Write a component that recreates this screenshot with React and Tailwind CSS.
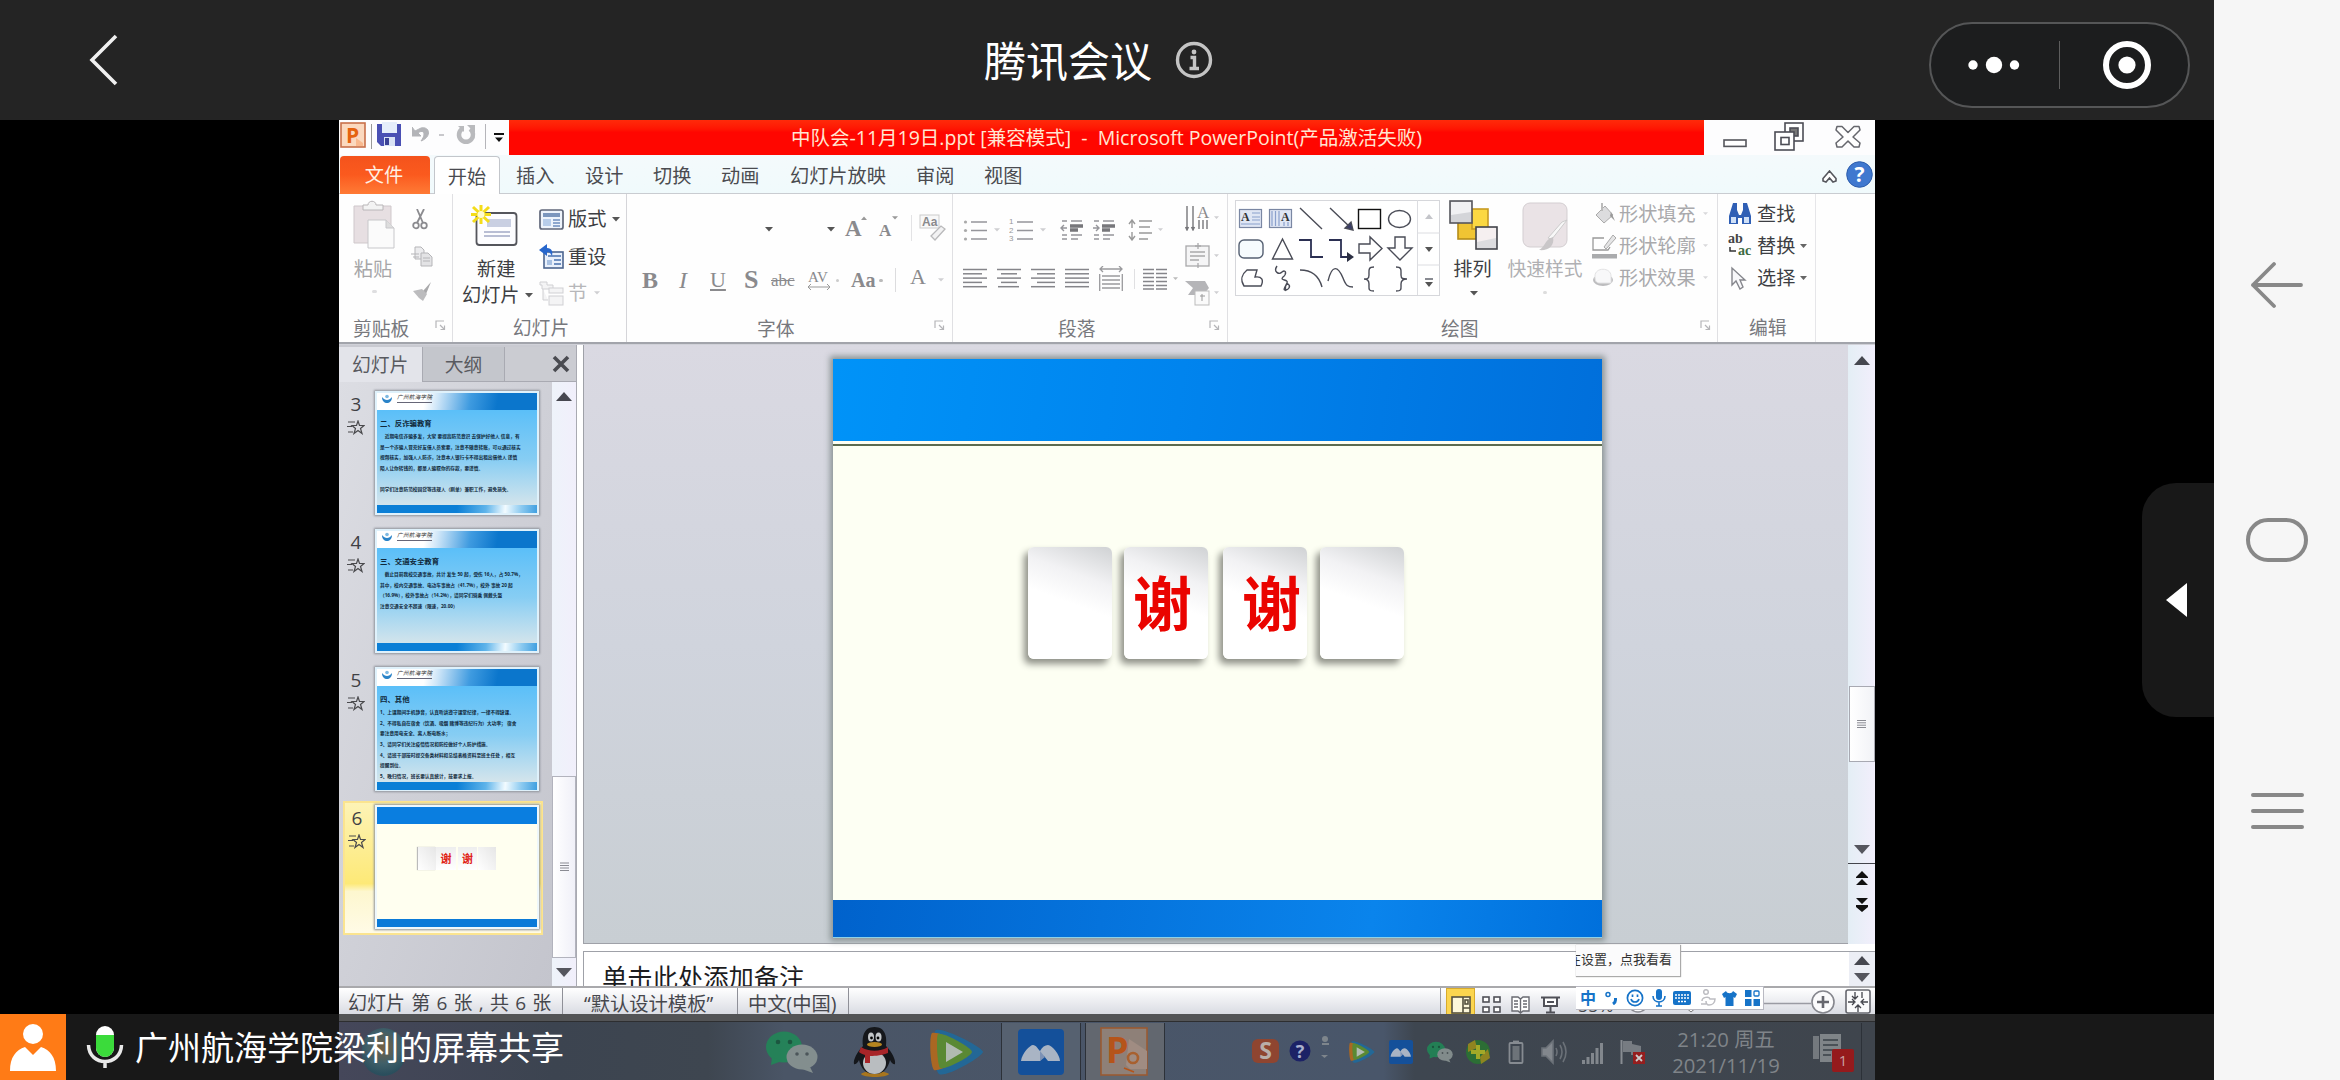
import React from "react";

const Caret = ({ c = "#555", w = 8, className = "" }) => (
  <svg width={w} height={w / 2 + 1} viewBox="0 0 8 5" className={"shrink-0 " + className}>
    <path d="M0 0H8L4 4.6Z" fill={c} />
  </svg>
);

const Launcher = ({ className = "" }) => (
  <svg width="11" height="11" viewBox="0 0 11 11" className={"shrink-0 " + className} fill="none" stroke="#b5b5b8" strokeWidth="1.2">
    <path d="M1 8V1H9M5 5L9 9M9.5 5.5V9.5H5.5" />
  </svg>
);

const Up = () => (
  <svg width="16" height="9" viewBox="0 0 16 9"><path d="M8 0L16 9H0Z" fill="#46474f" /></svg>
);
const Down = () => (
  <svg width="16" height="9" viewBox="0 0 16 9"><path d="M8 9L16 0H0Z" fill="#55565e" /></svg>
);

/* ---------- Meeting top bar ---------- */
const TopBar = () => (
  <header className="flex h-[120px] w-full shrink-0 items-start bg-[#242424] text-white">
    <svg width="30" height="52" viewBox="0 0 30 52" className="mt-[34px] ml-[88px] shrink-0" fill="none" stroke="#f0f0f0" strokeWidth="3.6">
      <path d="M28 2L4 26L28 50" />
    </svg>
    <div className="ml-[866px] w-[168px] shrink-0 text-[42px] leading-[60px] whitespace-nowrap mt-[31px]">腾讯会议</div>
    <svg width="40" height="40" viewBox="0 0 40 40" className="mt-[40px] ml-[22px] shrink-0" fill="none" stroke="#c4c4c4" strokeWidth="3.4">
      <circle cx="20" cy="20" r="16.5" />
      <path d="M16.5 17.5H20.5V28M15.5 28.5H25" />
      <circle cx="20" cy="12" r="2.4" fill="#c4c4c4" stroke="none" />
    </svg>
    <div className="mt-[22px] ml-[715px] flex h-[86px] w-[261px] shrink-0 items-center rounded-full border-2 border-[#555657] bg-[#1c1d1e]">
      <svg width="52" height="18" viewBox="0 0 52 18" className="ml-[37px]" fill="#fff">
        <circle cx="5" cy="9" r="4.7" /><circle cx="26" cy="9" r="8.2" /><circle cx="46.5" cy="9" r="4.7" />
      </svg>
      <div className="ml-[39px] h-[48px] w-px bg-[#5d5d5d]" />
      <svg width="50" height="50" viewBox="0 0 50 50" className="ml-[42px]">
        <circle cx="25" cy="25" r="21" fill="none" stroke="#fff" strokeWidth="6" />
        <circle cx="25" cy="25" r="8.6" fill="#fff" />
      </svg>
    </div>
  </header>
);

/* ---------- PowerPoint title ---------- */
const TitleRow = () => (
  <div className="flex h-[35px] shrink-0 bg-[#fdfdfe]">
    <div className="flex w-[170px] items-start pt-[2px]">
      <svg width="27" height="27" viewBox="0 0 27 27" className="ml-px">
        <rect x="1" y="1" width="24" height="24" fill="#fbd9bf" stroke="#c9704a" strokeWidth="1.6" />
        <path d="M16 16L23 21V24H16Z" fill="#f9b98f" />
        <text x="6" y="21" fontSize="21" fontWeight="bold" fill="#e5630f" fontFamily="Open Sans, sans-serif">P</text>
      </svg>
      <div className="mt-[2px] ml-[4px] h-[25px] w-px bg-[#999]" />
      <svg width="24" height="24" viewBox="0 0 24 24" className="ml-[5px]">
        <path d="M0 2H24V24H4L0 20Z" fill="#4a50b4" />
        <rect x="5" y="0" width="15" height="11" fill="#e6eefb" />
        <rect x="7" y="15" width="11" height="9" fill="#d9e2f5" /><rect x="8" y="16" width="4" height="7" fill="#3b4296" />
      </svg>
      <svg width="20" height="20" viewBox="0 0 20 20" className="mt-[3px] ml-[11px]">
        <path d="M0 2V11H9L6 8C11 4 15 8 9 16C20 12 18 1 9 3L3 6Z" fill="#b3b4b8" stroke="#b3b4b8" strokeWidth="1" />
      </svg>
      <div className="mt-[12px] ml-[7px] h-[2px] w-[5px] bg-[#c8c8cc]" />
      <svg width="22" height="20" viewBox="0 0 22 20" className="mt-[3px] ml-[12px]" fill="none" stroke="#b9babd" strokeWidth="4.5">
        <path d="M6 4A7 7 0 1 0 14 4" /><path d="M11 0H19V8Z" fill="#b9babd" stroke="none" /><path d="M2 1H8V7Z" fill="#b9babd" stroke="none" />
      </svg>
      <div className="mt-[2px] ml-[7px] h-[25px] w-px bg-[#b5b5ba]" />
      <svg width="10" height="10" viewBox="0 0 10 10" className="mt-[11px] ml-[8px]"><path d="M0 0H10V2H0ZM1 4.5H9L5 9Z" fill="#111" /></svg>
    </div>
    <div className="flex w-[1195px] items-center justify-center bg-linear-to-b from-[#ff2a0a] to-[#ff0600] to-35% text-[19.5px] leading-[30px] whitespace-nowrap text-[#ffe6d2]">
      <span>中队会-11月19日.ppt [兼容模式]&nbsp; -&nbsp; Microsoft PowerPoint(产品激活失败)</span>
    </div>
    <svg width="24" height="9" viewBox="0 0 24 9" className="mt-[19px] ml-[19px]" fill="#fff" stroke="#55565c" strokeWidth="1.6"><rect x="1" y="1" width="22" height="6.4" /></svg>
    <svg width="31" height="30" viewBox="0 0 31 30" className="mt-[2px] ml-[27px]" fill="#fff" stroke="#4c4d55" strokeWidth="1.6">
      <rect x="11" y="1" width="18" height="18" /><rect x="16" y="6" width="8" height="8" fill="#777" />
      <rect x="1" y="10" width="19" height="18" /><rect x="7" y="15.5" width="8" height="7" />
    </svg>
    <svg width="28" height="24" viewBox="0 0 28 24" className="mt-[5px] ml-[29px]" fill="#fff" stroke="#66676d" strokeWidth="1.5">
      <path d="M3 1.5H8L14 7.5L20 1.5H25L26 5L19 12L26 18L25 22H20L14 16L8 22H3L2 18L9 12L2 5Z" strokeLinejoin="round" />
    </svg>
  </div>
);

const TabRow = () => (
  <div className="flex h-[39px] shrink-0 items-stretch bg-linear-to-b from-[#f4fafc] to-[#f0fafc] text-[19.2px] leading-[41px] whitespace-nowrap text-[#4a4b50] shadow-[inset_0_-1px_0_#c9ccd1]">
    <div className="mt-px ml-px w-[90px] rounded-t-[4px] bg-linear-to-b from-[#f4531c] via-[#fb5a1e] to-[#ff7a35] pr-[2px] text-center leading-[38px] text-[#fff0e4]">文件</div>
    <div className="mt-px ml-[4px] w-[66px] rounded-t-[4px] border-x border-t border-[#c3c6cb] bg-white text-center leading-[39px]">开始</div>
    <div className="ml-[16px] w-[69px]">插入</div>
    <div className="w-[68px]">设计</div>
    <div className="w-[68px]">切换</div>
    <div className="w-[69px]">动画</div>
    <div className="w-[126px]">幻灯片放映</div>
    <div className="w-[68px]">审阅</div>
    <div className="w-[838px]">视图</div>
    <svg width="15" height="13" viewBox="0 0 15 13" className="mt-[15px] shrink-0" fill="#fff" stroke="#55565c" strokeWidth="1.6"><path d="M7.5 1L14 8.5V11L11 12L7.5 8L4 12L1 11V8.5Z" /></svg>
    <svg width="27" height="27" viewBox="0 0 27 27" className="mt-[6px] ml-[9px] shrink-0">
      <circle cx="13.5" cy="13.5" r="12.8" fill="#3f78cf" stroke="#2c5cab" />
      <text x="13.5" y="21" textAnchor="middle" fontSize="21" fontWeight="bold" fill="#fff" fontFamily="Open Sans, sans-serif">?</text>
    </svg>
  </div>
);

/* ---------- Ribbon groups ---------- */
const Clipboard = () => (
  <section className="flex w-[114px] shrink-0 flex-col border-r border-[#e0e0e3]">
    <div className="flex h-[118px]">
      <div className="ml-[14px] flex w-[43px] flex-col items-center pt-[6px]">
        <svg width="43" height="49" viewBox="0 0 43 49">
          <path d="M1 6H38V43H1Z" fill="#e7dfe2" stroke="#cfc8cb" />
          <path d="M10 10V5H15C15 0 23 0 23 5H30V10Z" fill="#f3f3f3" stroke="#b9b6b8" />
          <path d="M15 20H33L41 28V48H15Z" fill="#fbfbfb" stroke="#c7c7ca" /><path d="M33 20V28H41" fill="#ddd" stroke="#c7c7ca" />
        </svg>
        <div className="mt-[8px] -ml-[3px] text-[19.2px] leading-[24px] whitespace-nowrap text-[#a6a6a8]">粘贴</div>
        <div className="mt-[9px] h-[3px] w-[5px] self-center rounded bg-[#dedee0]" />
      </div>
      <div className="ml-[15px] flex flex-col items-center pt-[15px]">
        <svg width="16" height="21" viewBox="0 0 16 21" className="mr-[4px]" fill="none" stroke="#8b8b8f" strokeWidth="1.8">
          <path d="M5 0L11 14M12 0L5 14" /><circle cx="4" cy="16.5" r="2.8" /><circle cx="12" cy="16.5" r="2.8" />
        </svg>
        <svg width="22" height="21" viewBox="0 0 22 21" className="mt-[16px]" fill="#ececee" stroke="#b5b5b8">
          <path d="M4 1H10L13 4V13H4Z" /><path d="M10 7H17L21 11V20H10Z" fill="#e3e3e5" /><path d="M0 8H8M2 11H8M12 12H19M12 15H19" />
        </svg>
        <svg width="19" height="20" viewBox="0 0 19 20" className="mt-[15px]">
          <path d="M18 0L10 9L13 12Z" fill="#a9a9ab" /><path d="M0 9L9 7L14 12L10 19L6 16Z" fill="#bcbcbe" />
        </svg>
      </div>
    </div>
    <div className="flex h-[30px] items-center text-[18.8px] leading-[26px] whitespace-nowrap text-[#77787d]">
      <span className="mt-[3px] ml-[14px] w-[57px]">剪贴板</span><Launcher className="mb-[3px] ml-[25px]" />
    </div>
  </section>
);

const Slides = () => (
  <section className="flex w-[174px] shrink-0 flex-col border-r border-[#d5d5d9]">
    <div className="flex h-[118px]">
      <div className="ml-[9px] flex w-[71px] flex-col pt-[10px] text-[19.2px] leading-[24px] whitespace-nowrap text-[#3d3e43]">
        <svg width="48" height="44" viewBox="0 0 48 44" className="ml-[8px]">
          <rect x="6.5" y="9" width="40" height="32" rx="3" fill="#fdfdff" stroke="#55565c" strokeWidth="1.8" />
          <rect x="17" y="15" width="24" height="8" fill="#c9cfe2" /><path d="M14 28H40M14 32H40" stroke="#b9bed4" strokeWidth="2" />
          <path d="M11 1V20M1 10.5H21M3 3L19 18M19 3L3 18" stroke="#f4dc1a" strokeWidth="3" /><circle cx="11" cy="10.5" r="3.5" fill="#fffbd0" />
        </svg>
        <div className="mt-[9px] ml-[15px]">新建</div>
        <div className="mt-[2px] flex items-center">幻灯片<Caret className="ml-[5px]" /></div>
      </div>
      <div className="ml-[6px] flex flex-col pt-[12px] text-[19.2px] leading-[26px] whitespace-nowrap text-[#3d3e43]">
        <div className="flex h-[26px] items-center">
          <svg width="25" height="21" viewBox="0 0 25 21"><rect x="1" y="1" width="23" height="19" rx="2" fill="#eef3fb" stroke="#60677a" strokeWidth="1.7" /><rect x="4" y="4" width="17" height="4" fill="#7c96bd" /><rect x="4" y="10" width="8" height="7" fill="#b8cdea" /><path d="M14 11H21M14 14H21M14 17H21" stroke="#6f8fc0" strokeWidth="1.4" /></svg>
          <span className="ml-[4px]">版式</span><Caret className="ml-[6px]" />
        </div>
        <div className="mt-[12px] flex h-[26px] items-center">
          <svg width="25" height="26" viewBox="0 0 25 26"><rect x="5" y="8" width="19" height="16" fill="#e9f0fb" stroke="#4c658f" strokeWidth="1.6" /><path d="M8 16H13V21H8Z" fill="#a7c0e2" /><path d="M15 16H22M15 20H22M9 12H22" stroke="#4870ae" strokeWidth="1.6" /><path d="M0 6L8 0V4C13 4 14 8 13 12C11 8 10 8 8 8V12Z" fill="#2766cc" /></svg>
          <span className="ml-[4px]">重设</span>
        </div>
        <div className="mt-[10px] flex h-[26px] items-center text-[#b7b7ba]">
          <svg width="25" height="25" viewBox="0 0 25 25" fill="#f4f4f5" stroke="#d0d0d3"><path d="M1 1H8V4H14V8H3V4H1Z" /><path d="M4 8V19H9" /><rect x="10" y="7" width="14" height="5" /><rect x="10" y="15" width="14" height="9" /></svg>
          <span className="ml-[4px]">节</span><Caret c="#cfcfd2" w={6} className="ml-[7px]" />
        </div>
      </div>
    </div>
    <div className="h-[30px] pl-[3px] text-center text-[18.8px] leading-[33px] whitespace-nowrap text-[#77787d]">幻灯片</div>
  </section>
);

const FontGroup = () => (
  <section className="flex w-[326px] shrink-0 flex-col border-r border-[#e0e0e3]">
    <div className="flex h-[118px] flex-col font-['Liberation_Serif','Noto_Sans_CJK_SC',serif] leading-none text-[#8a8a8d]">
      <div className="mt-[18px] flex h-[32px] items-center">
        <Caret className="mt-[2px] ml-[138px]" /><Caret className="mt-[2px] ml-[54px]" />
        <span className="ml-[10px] w-[16px] text-[23px] font-bold">A</span><Caret c="#999" w={6} className="mb-[20px] rotate-180" />
        <span className="mt-[4px] ml-[12px] w-[13px] text-[17px] font-bold">A</span><Caret c="#999" w={6} className="mb-[20px]" />
        <div className="ml-[13px] h-[26px] w-px bg-[#e3e3e5]" />
        <svg width="28" height="28" viewBox="0 0 28 28" className="ml-[7px] shrink-0"><rect x="1" y="1" width="19" height="13" fill="#f8f8f8" stroke="#ccc" /><text x="3" y="12" fontSize="12" fontWeight="bold" fill="#8a8a8d" fontFamily="Liberation Sans, sans-serif">Aa</text><path d="M12 22L22 12L26 15L16 26Z" fill="#f2f2f3" stroke="#b9b9bb" strokeWidth="1.3" /></svg>
      </div>
      <div className="mt-[20px] flex h-[32px] items-center">
        <span className="ml-[15px] w-[37px] text-[24px] font-bold">B</span>
        <span className="w-[31px] text-[24px] italic">I</span>
        <span className="w-[34px] text-[22px] underline underline-offset-2">U</span>
        <span className="w-[27px] text-[26px] font-bold">S</span>
        <span className="w-[37px] text-[17px] line-through">abc</span>
        <div className="flex w-[28px] flex-col"><span className="text-[15px] leading-[14px]">AV</span>
          <svg width="22" height="6" viewBox="0 0 22 6" stroke="#999" fill="none"><path d="M0 3H22M3 0L0 3L3 6M19 0L22 3L19 6" /></svg></div>
        <div className="h-[3px] w-[3px] rounded bg-[#ccc]" />
        <span className="ml-[12px] w-[28px] text-[20px] font-bold">Aa</span>
        <div className="h-[3px] w-[4px] rounded bg-[#bbb]" />
        <div className="ml-[12px] h-[24px] w-px bg-[#dcdcde]" />
        <span className="mb-[6px] ml-[14px] w-[28px] text-[22px]">A</span>
        <Caret c="#d0d0d3" w={6} />
      </div>
    </div>
    <div className="flex h-[30px] items-center text-[18.8px] leading-[26px] whitespace-nowrap text-[#77787d]">
      <span className="mt-[3px] ml-[130px] w-[38px]">字体</span><Launcher className="mb-[3px] ml-[139px]" />
    </div>
  </section>
);

const Lines = ({ rows, w = 24, className = "" }) => (
  <svg width={w} height="22" viewBox={`0 0 ${w} 22`} className={"shrink-0 " + className} stroke="#85858a" strokeWidth="1.5">
    {rows.map(([a, b], i) => <path key={i} d={`M${a} ${1.5 + i * 4.3}H${b}`} />)}
  </svg>
);

const Bullets = ({ nums, className }) => (
  <svg width="24" height="22" viewBox="0 0 24 22" className={"shrink-0 " + className} stroke="#95959a" strokeWidth="1.5">
    <path d="M8 3H24M8 11.5H24M8 20H24" />
    {[3, 11.5, 20].map((y, i) => nums
      ? <text key={i} x="0" y={y + 2} fontSize="8" fill="#999" stroke="none" fontFamily="Liberation Sans, sans-serif">{i + 1}</text>
      : <circle key={i} cx="2.5" cy={y} r="1.6" fill="#aaa" stroke="none" />)}
  </svg>
);

const Dent = ({ flip, className }) => (
  <svg width="24" height="22" viewBox="0 0 24 22" className={"shrink-0 " + className} stroke="#95959a" strokeWidth="1.4">
    <path d="M2 2H7M11 2H22M2 16H7M11 16H22M2 20H7M11 20H18" />
    <path d="M10 7H23M10 11H18" strokeWidth="3.4" stroke="#77777b" />
    <path d={flip ? "M1 9H6M4 6L7 9L4 12" : "M7 9H2M4 6L1 9L4 12"} fill="none" />
  </svg>
);

const Paragraph = () => (
  <section className="flex w-[275px] shrink-0 flex-col border-r border-[#e0e0e3]">
    <div className="flex h-[118px]">
      <div className="flex w-[232px] shrink-0 flex-col">
        <div className="mt-[24px] flex h-[24px] items-center">
          <Bullets className="ml-[10px]" /><Caret c="#cfcfd2" w={6} className="ml-[7px]" />
          <Bullets nums className="ml-[9px]" /><Caret c="#cfcfd2" w={6} className="ml-[7px]" />
          <Dent className="ml-[14px]" /><Dent flip className="ml-[8px]" />
          <svg width="24" height="22" viewBox="0 0 24 22" className="ml-[12px] shrink-0" stroke="#999" strokeWidth="1.4" fill="none"><path d="M11 2H24M11 8H22M11 14H24M11 20H20" /><path d="M4 9V2M1 5L4 1L7 5M4 13V20M1 17L4 21L7 17" /></svg>
          <Caret c="#cfcfd2" w={5} className="ml-[6px]" />
        </div>
        <div className="mt-[25px] flex h-[24px] items-center">
          <Lines className="ml-[10px]" rows={[[0, 24], [0, 19], [0, 24], [0, 19], [0, 24]]} />
          <Lines className="ml-[10px]" rows={[[0, 24], [4, 20], [0, 24], [4, 20], [1, 22]]} />
          <Lines className="ml-[10px]" rows={[[0, 24], [6, 24], [0, 24], [6, 24], [0, 24]]} />
          <Lines className="ml-[10px]" rows={[[0, 24], [0, 24], [0, 24], [0, 24], [0, 24]]} />
          <svg width="24" height="25" viewBox="0 0 24 25" className="mb-[2px] ml-[10px] shrink-0" stroke="#9a9a9d" strokeWidth="1.3" fill="none"><path d="M1 3H23M4 0L1 3L4 6M20 0L23 3L20 6M0.7 8V25M23.3 8V25M3 10H21M3 14H21M3 18H21M3 22H21" /></svg>
          <div className="ml-[11px] h-[20px] w-px bg-[#e0e0e2]" />
          <svg width="24" height="22" viewBox="0 0 24 22" className="ml-[8px] shrink-0" stroke="#85858a" strokeWidth="1.4"><path d="M0 1.5H11M13 1.5H24M0 5.5H11M13 5.5H24M0 9.5H11M13 9.5H24M0 13.5H11M13 13.5H24M0 17.5H11M13 17.5H24M0 21H11M13 21H24" /></svg>
          <Caret c="#bbb" w={5} className="ml-[6px]" />
        </div>
      </div>
      <div className="flex flex-col">
        <div className="mt-[10px] flex h-[27px] items-center">
          <svg width="26" height="26" viewBox="0 0 26 26" stroke="#77777b" strokeWidth="1.4" fill="none"><path d="M2 1V24M8 1V24M14 15V24M18 15V24M22 15V24M0.5 22L2 25L3.5 22M6.5 22L8 25L9.5 22" /><text x="12" y="13" fontSize="17" fill="#8a8a8d" stroke="none" fontFamily="Liberation Serif, serif">A</text></svg>
          <Caret c="#cfcfd2" w={5} className="ml-[3px]" />
        </div>
        <div className="mt-[11px] flex h-[27px] items-center">
          <svg width="26" height="26" viewBox="0 0 26 26" stroke="#a9a9ab" strokeWidth="1.3" fill="#f5f5f6"><rect x="1" y="3" width="23" height="20" /><path d="M5 9H20M5 13H20M5 17H14M13 0V6M10 3H16M13 20V25" /></svg>
          <Caret c="#cfcfd2" w={5} className="ml-[3px]" />
        </div>
        <div className="mt-[10px] flex h-[27px] items-center">
          <svg width="26" height="26" viewBox="0 0 26 26"><path d="M0 1H20L24 8L18 15H3L8 8Z" fill="#b5b5b8" /><rect x="10" y="11" width="14" height="14" fill="#fafafa" stroke="#bbb" /><path d="M17 14V21M15 16H20" stroke="#999" /></svg>
          <Caret c="#cfcfd2" w={5} className="ml-[3px]" />
        </div>
      </div>
    </div>
    <div className="flex h-[30px] items-center text-[18.8px] leading-[26px] whitespace-nowrap text-[#77787d]">
      <span className="mt-[3px] ml-[105px] w-[38px]">段落</span><Launcher className="mb-[3px] ml-[113px]" />
    </div>
  </section>
);

const ShapeGallery = () => (
  <svg width="206" height="97" viewBox="0 0 206 97" className="mt-[6px] ml-[7px] shrink-0" fill="none" stroke="#4a4c57" strokeWidth="1.4">
    <rect x="0.5" y="0.5" width="204" height="95" stroke="#d6d7db" strokeWidth="1" fill="#fff" />
    <path d="M182.5 0V95M182 33H205M182 65H205" stroke="#dcdde1" strokeWidth="1" />
    <rect x="4.5" y="9.5" width="22" height="18" fill="#dfe6f4" stroke="#7a87a3" strokeWidth="1.2" /><path d="M17 13H25M17 17H25M17 20H25M6 24H25" stroke="#8aa0cc" strokeWidth="1.2" />
    <text x="6" y="21" fontSize="12" fontWeight="bold" fill="#333" stroke="none" fontFamily="Liberation Serif, serif">A</text>
    <rect x="34.5" y="9.5" width="22" height="18" fill="#dfe6f4" stroke="#7a87a3" strokeWidth="1.2" /><path d="M37 11V26M40.5 11V26M44 11V26M49 22V26M53 22V26" stroke="#8aa0cc" strokeWidth="1.2" />
    <text x="46" y="21" fontSize="12" fontWeight="bold" fill="#333" stroke="none" fontFamily="Liberation Serif, serif">A</text>
    <path d="M65 8L87 29M95 8L116 28" /><path d="M118 30L110 28L116 22Z" fill="#3b3d68" />
    <rect x="123.5" y="9.5" width="22" height="19" stroke="#111" /><ellipse cx="164.5" cy="19" rx="11" ry="8.5" />
    <rect x="4" y="40" width="24" height="18" rx="5" stroke="#556072" fill="#f6fbfd" /><path d="M47.5 39L57.5 59H37.5Z" />
    <path d="M64 40H76V57H88" stroke="#2b2f52" strokeWidth="1.8" /><path d="M94 40H106V57H114" stroke="#2b2f52" strokeWidth="1.8" /><path d="M112 52L119 57L112 62Z" fill="#2b2f42" stroke="none" />
    <path d="M124 44H135V37L147 48.5L135 60V53H124Z" /><path d="M160 37H170V48H177L165 60L153 48H160Z" />
    <path d="M12 70H22L20 77C27 76 29 80 26 86H9C5 80 7 74 12 70Z" /><path d="M42 66C38 72 44 75 47 72C51 69 52 74 48 77C44 81 54 79 52 83C50 87 48 90 50 90C54 90 56 86 53 84C50 84 50 88 51 91" />
    <path d="M65 70C77 70 84 76 87 87M93 81C97 64 103 66 108 78C111 86 113 87 118 87" />
    <path d="M139 67C133 67 134 70 134 75C134 79 132 79 129 79C132 79 134 80 134 84C134 89 133 91 139 91M161 67C167 67 166 70 166 75C166 79 168 79 172 79C168 79 166 80 166 84C166 89 167 91 161 91" />
    <path d="M190 19H198L194 14Z" fill="#c4c5ca" stroke="none" /><path d="M190 47H198L194 52ZM190 82H198L194 87Z" fill="#555" stroke="none" /><path d="M190 79H198" strokeWidth="1.3" />
  </svg>
);

const Drawing = () => (
  <section className="flex w-[490px] shrink-0 flex-col border-r border-[#e0e0e3]">
    <div className="flex h-[118px]">
      <ShapeGallery />
      <div className="ml-[8px] flex w-[50px] flex-col items-center pt-[6px] text-[19.2px] leading-[24px] whitespace-nowrap text-[#3d3e43]">
        <svg width="50" height="50" viewBox="0 0 50 50" strokeWidth="1.6">
          <rect x="9" y="19" width="20" height="20" fill="#f0c433" stroke="#b58d1a" /><rect x="23" y="9" width="16" height="20" fill="#fbd842" stroke="#c79b22" />
          <rect x="1" y="1" width="22" height="22" fill="#d4d5d9" stroke="#55565c" /><rect x="27" y="27" width="21" height="22" fill="#dcdcdf" stroke="#44454b" /><path d="M2 2H22V12L2 15Z" fill="#f1f1f3" stroke="none" /><path d="M28 28H47V38L28 42Z" fill="#f5eff0" stroke="none" />
        </svg>
        <div className="mt-[7px] -ml-[3px]">排列</div><Caret className="mt-[10px]" />
      </div>
      <div className="ml-[7px] flex w-[78px] flex-col items-center pt-[8px] text-[18.8px] leading-[24px] whitespace-nowrap text-[#b0b0b3]">
        <svg width="46" height="49" viewBox="0 0 46 49"><rect x="1" y="1" width="44" height="44" rx="7" fill="#eae3e6" stroke="#d3ced1" /><path d="M45 18L30 37L26 36L40 20Z" fill="#f8f8f8" stroke="#ccc" /><path d="M31 35C33 44 26 49 17 48C24 44 22 38 31 35Z" fill="#c9c6c8" /></svg>
        <div className="mt-[6px]">快速样式</div><div className="mt-[10px] h-[3px] w-[4px] rounded bg-[#ddd]" />
      </div>
      <div className="ml-[7px] flex flex-col pt-[7px] text-[19.2px] leading-[26px] whitespace-nowrap text-[#a9a9ac]">
        <div className="flex h-[26px] items-center"><svg width="26" height="22" viewBox="0 0 26 22"><path d="M5 12L14 3L22 12L13 20Z" fill="#dcdcde" stroke="#aaa" /><path d="M20 9L24 18L19 13Z" fill="#999" /><path d="M11 8V0" stroke="#bbb" strokeWidth="2" /></svg><span className="ml-[2px]">形状填充</span><Caret c="#d9d9db" w={5} className="ml-[7px]" /></div>
        <div className="mt-[6px] flex h-[26px] items-center"><svg width="26" height="25" viewBox="0 0 26 25"><path d="M13 4H2V16H17L19 13" fill="none" stroke="#999" strokeWidth="1.3" /><path d="M13 13L22 1L25 4L15 15Z" fill="#e5e5e6" stroke="#aaa" /><rect x="1" y="20" width="25" height="4.5" fill="#aaabad" /></svg><span className="ml-[2px]">形状轮廓</span><Caret c="#d9d9db" w={5} className="ml-[7px]" /></div>
        <div className="mt-[6px] flex h-[26px] items-center"><svg width="26" height="22" viewBox="0 0 26 22"><ellipse cx="12" cy="13" rx="10" ry="6" fill="#bcbcbe" /><path d="M4 9C4 0 20 0 20 9V16H9C5 16 4 14 4 9Z" fill="#f8f8f9" stroke="#e3e3e4" /></svg><span className="ml-[2px]">形状效果</span><Caret c="#d9d9db" w={5} className="ml-[7px]" /></div>
      </div>
    </div>
    <div className="flex h-[30px] items-center text-[18.8px] leading-[26px] whitespace-nowrap text-[#77787d]">
      <span className="mt-[3px] ml-[213px] w-[38px]">绘图</span><Launcher className="mb-[3px] ml-[221px]" />
    </div>
  </section>
);

const Editing = () => (
  <section className="flex w-[98px] shrink-0 flex-col border-r border-[#e6e6e9]">
    <div className="flex h-[118px] flex-col pt-[7px] pl-[10px] text-[19.2px] leading-[26px] whitespace-nowrap text-[#3d3e43]">
      <div className="flex h-[26px] items-center"><svg width="24" height="22" viewBox="0 0 24 22"><path d="M5 0H9V7L11 12H13L15 7V0H19L23 13V21H14V15H10V21H1V13Z" fill="#2f5fb5" /><rect x="3" y="14" width="5" height="6" fill="#cfe0f7" /><rect x="16" y="14" width="5" height="6" fill="#cfe0f7" /></svg><span className="ml-[5px]">查找</span></div>
      <div className="mt-[6px] flex h-[26px] items-center"><svg width="24" height="24" viewBox="0 0 24 24" fontFamily="Liberation Serif, serif" fontWeight="bold" fontSize="14"><text x="0" y="9" fill="#444">ab</text><text x="10" y="21" fill="#3d6b42">ac</text><path d="M2 13V17H8" stroke="#333" fill="none" strokeWidth="1.5" /></svg><span className="ml-[5px]">替换</span><Caret c="#666" w={7} className="ml-[5px]" /></div>
      <div className="mt-[6px] flex h-[26px] items-center"><svg width="24" height="24" viewBox="0 0 24 24"><path d="M4 2V19L8 15L12 23L15 21L12 14H17Z" fill="#f8f8fa" stroke="#85868c" strokeWidth="1.4" /></svg><span className="ml-[5px]">选择</span><Caret c="#666" w={7} className="ml-[5px]" /></div>
    </div>
    <div className="h-[30px] pl-[31px] text-[18.8px] leading-[33px] whitespace-nowrap text-[#77787d]">编辑</div>
  </section>
);

/* ---------- Slide thumbnails ---------- */
const Star = () => (
  <svg width="18" height="15" viewBox="0 0 18 15" fill="none" stroke="#4a4a4d" strokeWidth="1.2">
    <path d="M1 2H8M0 6.5H5M1 12H6" /><path d="M11 1L12.5 5.5H17L13.5 8.5L15 13.5L11 10.5L7 13.5L8.5 8.5L5 5.5H9.5Z" />
  </svg>
);

const TextThumb = ({ title, lines }) => (
  <div className="flex h-[124px] w-[164px] flex-col border-2 border-[#dff1fb] bg-linear-to-b from-[#48bafa] via-[#86cdf3] via-55% to-[#dfe8ea] shadow-[0_0_2px_1px_#8f939b]">
    <div className="flex h-[17px] shrink-0 items-start bg-[linear-gradient(100deg,#fff_30%,#cfe6f8_38%,#3f9be0_58%,#0b76cc_75%)]">
      <svg width="12" height="12" viewBox="0 0 12 12" className="ml-[4px]"><path d="M1 4C1 12 11 12 11 4C8 8 4 8 1 4Z" fill="#2a83c8" /><circle cx="6" cy="3.5" r="1.8" fill="#7db9e2" /></svg>
      <div className="ml-[4px] border-b border-[#667] font-['Liberation_Serif','Noto_Sans_CJK_SC',serif] text-[5.5px] leading-[9px] tracking-[0.4px] whitespace-nowrap text-[#333] italic">广州航海学院</div>
    </div>
    <div className="mt-[6px] flex-1 px-[3px] whitespace-nowrap text-[#10283a]">
      <div className="text-[7.4px] leading-[15px] font-bold">{title}</div>
      {lines.map((l, i) => <div key={i} className="h-[10.7px] text-[4.7px] leading-[10.7px] font-bold">{l || "\u00a0"}</div>)}
    </div>
    <div className="h-[8px] shrink-0 bg-[linear-gradient(95deg,#0b7fd6_50%,#5fb4ea_68%,#f2fbff_80%,#8ccaf0_90%,#3f9fe0)]" />
  </div>
);

const Item = ({ n, selected, children }) => (
  <div className={"ml-[4px] flex h-[134px] w-[200px] shrink-0 " + (selected ? "border-2 border-[#fbe48f] bg-[linear-gradient(180deg,#fdf3b6,#fde977_62%,#fdf7cf_68%,#fffbe6)] pt-[2px]" : "pt-[4px]")}>
    <div className={"flex shrink-0 flex-col items-center text-[19px] leading-[26px] text-[#3f4044] " + (selected ? "w-[30px] pr-[6px]" : "w-[32px] pr-[6px]")}>
      <span>{n}</span><span className="mt-[3px]"><Star /></span>
    </div>
    {children}
  </div>
);

const SidePanel = () => (
  <aside className="flex w-[238px] shrink-0 flex-col border-r border-[#a9aab2] bg-[#c9cad1]">
    <div className="mt-[2px] flex h-[35px] shrink-0 text-[18.8px] leading-[36px] whitespace-nowrap text-[#595a60]">
      <div className="w-[83px] bg-[#e3e4ea] pl-[13px]">幻灯片</div>
      <div className="w-[83px] border-x border-b border-[#a9aab2] bg-[#c4c6cc] text-center">大纲</div>
      <div className="flex flex-1 items-center justify-end border-b border-[#a9aab2] bg-[#cbccd2] pr-[6px]">
        <svg width="18" height="18" viewBox="0 0 18 18" stroke="#4a4b51" strokeWidth="3.6"><path d="M2 2L16 16M16 2L2 16" /></svg>
      </div>
    </div>
    <div className="flex flex-1">
      <div className="flex w-[213px] shrink-0 flex-col gap-[4px] bg-linear-to-br from-[#dcdde3] via-[#cfd0d7] to-[#c4c5cd] pt-[5px]">
        <Item n="3"><TextThumb title="二、反诈骗教育" lines={[
          "　近期电信诈骗多发，大家 要提高防范意识 去保护好他人 信息，有",
          "是一个诈骗人冒充好友借人员索要，注意不随意转账，可以通过核实",
          "视频核实，加强人人防诈，注意本人银行卡不得出租出借他人 谨慎",
          "陌人让你转钱的，都是人骗取你的存款，要谨慎。", "",
          "同学们注意防范校园贷等违规人（刷单）兼职工作，避免损失。"]} /></Item>
        <Item n="4"><TextThumb title="三、交通安全教育" lines={[
          "　截止目前我校交通事故，共计 发生 50 起，受伤 16人，占 50.7%，",
          "其中，校内交通事故、电动车事故占（41.7%），校外 事故 20 起",
          "（16.9%），校外事故占（14.2%），请同学们骑乘 佩戴头盔",
          "注意交通安全不超速（限速，20.00）"]} /></Item>
        <Item n="5"><TextThumb title="四、其他" lines={[
          "1、上课期间手机静音，认真听讲遵守课堂纪律，一律不得缺课。",
          "2、不得私自在宿舍（饮酒、吸烟 赌博等违纪行为）大功率； 宿舍",
          "要注意用电安全、离人断电断水；",
          "3、请同学们关注疫情情况和防控做好个人防护措施。",
          "4、请班干部按时提交各类材料和总结表格资料至班主任处 ，相互",
          "提醒到位。", "5、晚归情况，班长要认真统计，按要求上报。"]} /></Item>
        <Item n="6" selected>
          <div className="flex h-[124px] w-[164px] flex-col border-2 border-[#eef7fb] bg-[#fffff0] shadow-[0_0_2px_1px_#8f939b]">
            <div className="h-[17px] bg-[#0a7ee0]" />
            <div className="mt-[23px] ml-[41px] flex text-center text-[11px] leading-[23px] font-bold text-[#e02216]">
              <span className="h-[23px] w-[18px] bg-linear-to-bl from-[#e6e6e6] to-white shadow-[-1px_0_1px_#bbb]" />
              <span className="h-[23px] w-[20px] bg-linear-to-b from-[#eee] to-white">谢</span>
              <span className="ml-[2px] h-[23px] w-[19px] bg-linear-to-b from-[#eee] to-white">谢</span>
              <span className="ml-px h-[23px] w-[18px] bg-linear-to-bl from-[#e6e6e6] to-white" />
            </div>
            <div className="mt-auto h-[8px] bg-[#0a7ad8]" />
          </div>
        </Item>
      </div>
      <div className="flex flex-1 flex-col items-center bg-linear-to-r from-[#eef3fa] to-[#f1effb]">
        <div className="mt-[10px]"><Up /></div>
        <div className="mt-[375px] flex h-[182px] w-[24px] items-center justify-center border border-[#b2b3bd] bg-linear-to-r from-white to-[#f0f0f8]">
          <svg width="9" height="10" viewBox="0 0 9 10" stroke="#8a8b93"><path d="M0 1H9M0 3.5H9M0 6H9M0 8.5H9" /></svg>
        </div>
        <div className="mt-[10px]"><Down /></div>
      </div>
    </div>
  </aside>
);

/* ---------- Main slide ---------- */
const Card = ({ className = "", children }) => (
  <div className={"h-[112px] w-[84px] shrink-0 rounded-[6px] bg-[linear-gradient(200deg,#d2d4d6_2%,#f2f2f4_28%,#fff_50%)] shadow-[-4px_5px_7px_#8f9188] text-[59px] leading-[112px] font-bold text-[#ea0400] " + className}>{children}</div>
);

const SlideArea = () => (
  <div className="flex h-[599px] shrink-0">
    <div className="flex w-[1265px] items-start border-b border-l border-[#9fa1a8] bg-linear-to-b from-[#dad9e2] via-[#d0d4dd] to-[#c8ced3]">
      <div className="mt-[14px] ml-[249px] flex h-[579px] w-[769px] flex-col bg-[#fdfff3] shadow-[0_0_6px_3px_#8b9596]">
        <div className="h-[82px] shrink-0 bg-[linear-gradient(98deg,#0093f8,#0084ee_45%,#006fdb)]" />
        <div className="mt-[3px] h-[2px] shrink-0 bg-[#5c6b4f]" />
        <div className="mt-[101px] flex pl-[195px]">
          <Card /><Card className="ml-[12px] pl-[9px]">谢</Card><Card className="ml-[15px] pl-[19px]">谢</Card><Card className="ml-[13px]" />
        </div>
        <div className="mt-auto h-[38px] shrink-0 border-b border-[#8fd0e6] bg-[linear-gradient(98deg,#0062cc,#0a84ec_70%,#0070dc)]" />
      </div>
    </div>
    <div className="flex w-[27px] flex-col items-center bg-linear-to-r from-[#e4eef5] to-[#f2effc]">
      <div className="mt-[11px]"><Up /></div>
      <div className="mt-[321px] flex h-[76px] w-[26px] shrink-0 items-center justify-center border border-[#a8a9b2] bg-linear-to-r from-white to-[#f2f3f7]">
        <svg width="9" height="8" viewBox="0 0 9 8" stroke="#8a8b93"><path d="M0 0.5H9M0 2.8H9M0 5.2H9M0 7.5H9" /></svg>
      </div>
      <div className="mt-[83px]"><Down /></div>
      <div className="mt-[9px] h-px w-full bg-[#44454c]" />
      <svg width="12" height="42" viewBox="0 0 12 42" className="mt-[7px]"><path d="M6 0L12 6V7H0V6ZM6 8L12 14H0ZM0 27H12L6 33ZM0 34H12V36L6 41L0 36Z" fill="#111" /></svg>
    </div>
  </div>
);

const Notes = () => (
  <div className="mt-[7px] flex h-[35px] shrink-0 overflow-hidden border-t border-l border-[#9fa1a8] bg-white">
    <div className="h-[34px] w-[1265px] overflow-hidden pl-[18px] text-[25.3px] leading-[51px] whitespace-nowrap text-[#1c1c1e]">单击此处添加备注</div>
    <div className="flex flex-1 flex-col items-center gap-[8px] bg-[#eceef5] pt-[4px]"><Up /><Down /></div>
  </div>
);

const ime = "#1673c8";
const ImeBar = () => (
  <div className="absolute top-[-41px] left-[1237px] flex flex-col items-start">
    <div className="h-[32px] w-[105px] overflow-hidden border-r border-b border-[#aaa] bg-[#fbfbfc] text-[13px] leading-[29px] whitespace-nowrap text-[#333] shadow-[0_0_1px_#aaa]"><span className="-ml-[8px]">在设置，点我看看</span></div>
    <div className="mt-[9px] flex h-[24px] w-[188px] items-center border-t border-r border-b border-[#b9b9c2] bg-white">
      <span className="ml-[4px] w-[18px] text-[16px] leading-[20px] font-bold text-[#1673c8]">中</span>
      <svg width="13" height="14" viewBox="0 0 13 14" className="ml-[7px]" fill="none" stroke={ime}><circle cx="3" cy="3.5" r="2" strokeWidth="1.5" /><path d="M10.5 7V9C10.5 11 9.5 12 8 13" strokeWidth="3" /></svg>
      <svg width="18" height="18" viewBox="0 0 18 18" className="ml-[8px]" fill="none" stroke={ime} strokeWidth="1.7"><circle cx="9" cy="9" r="7.6" /><path d="M5 10C6 14 12 14 13 10M6.5 5.5V8M11.5 5.5V8" /></svg>
      <svg width="14" height="18" viewBox="0 0 14 18" className="ml-[8px]"><rect x="4" y="0" width="6" height="11" rx="3" fill={ime} /><path d="M1 7C1 15 13 15 13 7M7 13V17M4 17H10" stroke={ime} strokeWidth="1.6" fill="none" /></svg>
      <svg width="18" height="14" viewBox="0 0 18 14" className="ml-[7px]"><rect width="18" height="14" rx="2" fill={ime} /><path d="M2 4H16M2 7H16M5 10.5H13" stroke="#fff" strokeWidth="1.5" strokeDasharray="2 1" /></svg>
      <svg width="16" height="18" viewBox="0 0 16 18" className="ml-[9px]" fill="none" stroke="#bdbdc2" strokeWidth="1.5"><circle cx="6" cy="3" r="2.3" /><path d="M2 12C2 8 9 7 10 10H15C15 14 12 16 9 16C6 16 6 12 6 12M1 15H6" /></svg>
      <svg width="15" height="15" viewBox="0 0 15 15" className="ml-[6px]"><path d="M4 0C5 3 10 3 11 0L15 3L13 7L11.5 6V15H3.5V6L2 7L0 3Z" fill={ime} /></svg>
      <svg width="15" height="16" viewBox="0 0 15 16" className="ml-[8px]" fill={ime}><rect width="6.5" height="7" /><rect x="9" y="1" width="5" height="5" rx="1" fill="none" stroke={ime} strokeWidth="1.3" /><rect y="9" width="6.5" height="7" /><rect x="8.5" y="9" width="6.5" height="7" /></svg>
    </div>
  </div>
);

const StatusBar = () => (
  <div className="relative h-[28px] shrink-0">
    <div className="flex h-[28px] items-start overflow-hidden border-t-2 border-[#a9a9ac] bg-linear-to-b from-white to-[#dadce3] text-[19px] leading-[31px] whitespace-nowrap text-[#46474d]">
      <span className="ml-[9px] w-[204px] [word-spacing:1.3px]">幻灯片 第 6 张 , 共 6 张</span>
      <span className="ml-[10px] h-[26px] w-px bg-[#8f9098]" />
      <span className="ml-[21px] w-[131px] text-[19.3px]">“默认设计模板”</span>
      <span className="ml-[22px] h-[26px] w-px bg-[#8f9098]" />
      <span className="ml-[10px] w-[91px] text-[19.3px]">中文(中国)</span>
      <span className="ml-[9px] h-[26px] w-px bg-[#8f9098]" />
      <span className="ml-[591px] h-[26px] w-px bg-[#9b9ca4]" />
      <div className="ml-[5px] flex h-[26px] w-[29px] justify-center border border-b-0 border-[#d8ab2c] bg-[#fbd54f]">
        <svg width="20" height="18" viewBox="0 0 20 18" className="mt-[7px]" fill="#fdf7da" stroke="#55513f" strokeWidth="1.6"><rect x="1" y="1" width="18" height="16" /><path d="M12 1V17M12 12H19" /><rect x="14" y="4" width="3" height="4" /></svg>
      </div>
      <svg width="19" height="17" viewBox="0 0 19 17" className="mt-[8px] ml-[7px]" fill="#fff" stroke="#505158" strokeWidth="1.6"><rect x="1" y="1" width="6" height="5" /><rect x="12" y="1" width="6" height="5" /><rect x="1" y="11" width="6" height="5" /><rect x="12" y="11" width="6" height="5" /></svg>
      <svg width="19" height="19" viewBox="0 0 19 19" className="mt-[8px] ml-[10px]" fill="#fff" stroke="#6a6b72" strokeWidth="1.4"><path d="M1 1H7L9.5 3L12 1H18V15H12L9.5 17L7 15H1ZM9.5 3V19M3 5H7M3 8H7M3 11H7M12 5H16M12 8H16M12 11H16" /></svg>
      <svg width="19" height="18" viewBox="0 0 19 18" className="mt-[8px] ml-[11px]" fill="#fff" stroke="#505158" strokeWidth="2"><path d="M0 1.5H19M3 2V10H16V2M9.5 10V16M5 16.5H14M6 6H13" /></svg>
      <span className="ml-[18px] h-[26px] w-[38px] text-[18px] leading-[34px]">55%</span>
      <svg width="22" height="24" viewBox="0 0 22 24" className="mt-[3px] ml-[11px] shrink-0"><circle cx="11" cy="11" r="10" fill="#fafafc" stroke="#8a8b92" strokeWidth="1.5" /></svg>
      <svg width="162" height="22" viewBox="0 0 162 22" className="mt-[4px] shrink-0"><path d="M0 11.5H162" stroke="#9a9ba3" strokeWidth="1.5" /><path d="M35 8H49V14L42 20L35 14Z" fill="#fafafc" stroke="#777" /></svg>
      <svg width="24" height="24" viewBox="0 0 24 24" className="mt-[2px] shrink-0"><circle cx="12" cy="12" r="11" fill="#fbfbfc" stroke="#85868d" strokeWidth="1.6" /><path d="M12 6V18M6 12H18" stroke="#66676e" strokeWidth="2.6" /></svg>
      <svg width="26" height="25" viewBox="0 0 26 25" className="mt-px ml-[10px] shrink-0" stroke="#44454c" strokeWidth="1.6" fill="#fafafb"><rect x="1" y="1" width="24" height="23" rx="2" stroke="#66676e" /><path d="M10 3V9M7 7L10 10L13 7M17 3V9M3 13H9M7 10L10 13L7 16M23 13H17M19 10L16 13L19 16M13 23V17M10 19L13 16L16 19" strokeWidth="1.3" /></svg>
    </div>
    <ImeBar />
  </div>
);

/* ---------- Windows taskbar ---------- */
const WeChat = ({ w, h, className }) => (
  <svg width={w} height={h} viewBox="0 0 52 42" className={"shrink-0 opacity-85 " + className}>
    <ellipse cx="18" cy="16" rx="18" ry="15.5" fill="#1f8a57" /><path d="M6 26L5 34L16 30Z" fill="#1f8a57" />
    <circle cx="12" cy="11" r="2.3" fill="#15573a" /><circle cx="24" cy="11" r="2.3" fill="#15573a" />
    <ellipse cx="36" cy="26" rx="15.5" ry="12.5" fill="#8d9896" /><path d="M44 36L47 42L36 38Z" fill="#8d9896" /><circle cx="31" cy="23" r="1.8" fill="#4d5658" /><circle cx="41" cy="23" r="1.8" fill="#4d5658" />
  </svg>
);
const PlayIcon = ({ w, h, className }) => (
  <svg width={w} height={h} viewBox="0 0 54 48" className={"shrink-0 opacity-90 " + className}>
    <path d="M6 2C14 -1 54 20 53 24C52 29 16 50 9 46C4 42 2 4 6 2Z" fill="#1f6a9c" /><path d="M2 5C8 2 38 18 38 24C38 30 8 44 4 42C0 38 -1 8 2 5Z" fill="#b56a1c" /><path d="M8 6C14 4 42 20 42 24C42 28 16 42 10 40C7 36 6 8 8 6Z" fill="#5c8f2f" /><path d="M16 14L33 24L16 34Z" fill="#bdc6ba" />
  </svg>
);
const Mountain = ({ w, className }) => (
  <svg width={w} height={w} viewBox="0 0 46 46" className={"shrink-0 " + className}>
    <rect width="46" height="46" rx="4" fill="#14509a" /><path d="M3 32C4 24 12 16 15 16C18 16 20 20 22 22C24 18 27 16 30 16C34 16 42 26 42 32H30L26 27L22 32Z" fill="#a9b4c4" /><path d="M22 22L27 28L22 32Z" fill="#7d92b5" />
  </svg>
);

const Taskbar = () => (
  <div className="flex h-[66px] w-[1536px] shrink-0 flex-col">
    <div className="h-[8px] shrink-0 border-b border-[#2d2e30] bg-[#535456]" />
    <div className="flex h-[58px] items-center bg-[linear-gradient(90deg,#45475a_0,#3c4450_14%,#3e4650_24%,#4a5566_29%,#49566a_68%,#3e4650_70%,#3f454d_100%)] pt-px">
      <div className="ml-[23px] h-[48px] w-[43px] rounded-full bg-[radial-gradient(circle_at_50%_40%,#8a6a3a,#3f6a70_45%,#20525f_75%)] opacity-70" />
      <WeChat w={52} h={42} className="ml-[361px]" />
      <svg width="43" height="52" viewBox="0 0 43 52" className="ml-[35px] shrink-0">
        <path d="M8 48C12 44 31 44 36 48C34 52 10 52 8 48Z" fill="#a8761e" /><path d="M21.5 1C10 1 9 12 10 20C4 26 0 34 1 38C3 39 5 36 6 34C8 42 12 48 21.5 48S35 42 37 34C38 36 40 39 42 38C43 34 39 26 33 20C34 12 33 1 21.5 1Z" fill="#15171b" />
        <ellipse cx="21.5" cy="37" rx="11.5" ry="11" fill="#b9bdc0" /><ellipse cx="18" cy="11" rx="3" ry="4.5" fill="#c3c6c9" /><ellipse cx="25.5" cy="11" rx="3" ry="4.5" fill="#c3c6c9" /><circle cx="18.5" cy="12" r="1.4" /><circle cx="25" cy="12" r="1.4" />
        <ellipse cx="21.5" cy="18.5" rx="7.5" ry="2.5" fill="#b5851f" /><path d="M8 21C16 26 27 26 35 21V27C27 30 19 30 17 30V37H12V29C9 28 7 27 6 26Z" fill="#a82529" />
      </svg>
      <PlayIcon w={54} h={48} className="ml-[34px]" />
      <div className="ml-[17px] flex h-[57px] w-[80px] shrink-0 items-center justify-center border-x border-[#2c3138] bg-[#566170]"><Mountain w={46} className="" /></div>
      <div className="ml-[4px] flex h-[57px] w-[80px] shrink-0 items-center justify-center border-x border-[#2c3138] bg-[#62676f]">
        <svg width="50" height="50" viewBox="0 0 50 50"><rect x="1" y="1" width="46" height="47" fill="#8e8078" stroke="#9a5a32" strokeWidth="1.6" /><path d="M29 12L47 24V42H30L26 38Z" fill="#a08c82" /><text x="6" y="36" fontSize="36" fontWeight="bold" fill="#b5541a" fontFamily="Open Sans, sans-serif">P</text><circle cx="33" cy="31" r="5" fill="none" stroke="#a8602f" strokeWidth="2.6" /><path d="M24 41L34 45" stroke="#b5541a" strokeWidth="1.6" /></svg>
      </div>
      <svg width="27" height="25" viewBox="0 0 27 25" className="ml-[87px] shrink-0"><rect width="27" height="24" rx="6" fill="#8f4530" /><text x="13.5" y="20" textAnchor="middle" fontSize="23" fontWeight="bold" fill="#b9aea9" fontFamily="Open Sans, sans-serif">S</text></svg>
      <svg width="22" height="24" viewBox="0 0 22 24" className="ml-[10px] shrink-0"><circle cx="11" cy="11" r="10.5" fill="#1c2266" /><text x="11" y="18" textAnchor="middle" fontSize="18" fontWeight="bold" fill="#aab0cc" fontFamily="Open Sans, sans-serif">?</text></svg>
      <svg width="8" height="26" viewBox="0 0 8 26" className="mb-[10px] ml-[10px] shrink-0" fill="#7e858c"><circle cx="4" cy="5" r="3" /><rect x="1" y="9" width="7" height="2" /><path d="M0 21H7L3.5 24Z" /></svg>
      <PlayIcon w={26} h={24} className="ml-[20px]" />
      <Mountain w={24} className="ml-[14px]" />
      <WeChat w={26} h={22} className="ml-[14px]" />
      <svg width="26" height="26" viewBox="0 0 26 26" className="ml-[12px] shrink-0"><circle cx="13" cy="13" r="12" fill="#2c6e35" /><path d="M3 5L10 1L12 9L3 13ZM23 10L25 19L16 25L15 18Z" fill="#8f8420" /><path d="M13 6V20M6 13H20" stroke="#a2a928" strokeWidth="4" /></svg>
      <svg width="16" height="26" viewBox="0 0 16 26" className="ml-[17px] shrink-0" fill="none" stroke="#868b91" strokeWidth="1.8"><rect x="1.5" y="4" width="13" height="20" rx="1" /><path d="M5 2.5H11" /><rect x="4.5" y="7" width="7" height="14" fill="#6d7379" stroke="none" /></svg>
      <svg width="27" height="26" viewBox="0 0 27 26" className="ml-[17px] shrink-0" fill="none" stroke="#6b7178" strokeWidth="1.6"><path d="M1 9H5L12 2V24L5 17H1Z" fill="#82878d" /><path d="M15 9Q17 13 15 17M19 6Q23 13 19 20M22 3Q28 13 22 23" /></svg>
      <svg width="22" height="22" viewBox="0 0 22 22" className="mt-[3px] ml-[14px] shrink-0" fill="#82878d"><rect x="0" y="18" width="3" height="4" /><rect x="4.5" y="15" width="3" height="7" /><rect x="9" y="11" width="3" height="11" /><rect x="13.5" y="6" width="3" height="16" /><rect x="18" y="1" width="3" height="21" /></svg>
      <svg width="26" height="26" viewBox="0 0 26 26" className="ml-[16px] shrink-0"><path d="M1.5 1V25" stroke="#888d92" strokeWidth="2" /><path d="M3 2H12V5L21 7V16H11V13H3Z" fill="#777c82" /><rect x="13" y="13" width="12" height="12" fill="#951e1e" /><path d="M16 16L22 22M22 16L16 22" stroke="#ccc" strokeWidth="1.8" /></svg>
      <div className="ml-[21px] w-[118px] shrink-0 text-center text-[20.3px] leading-[26px] whitespace-nowrap text-[#7f8489]"><div>21:20 周五</div><div>2021/11/19</div></div>
      <svg width="43" height="40" viewBox="0 0 43 40" className="ml-[28px] shrink-0"><path d="M0 4H6V27H0Z" fill="#74797e" /><rect x="7" y="2" width="21" height="28" fill="#7f8488" /><path d="M10 8H25M10 13H25M10 18H25M10 23H18" stroke="#4a5157" strokeWidth="2" /><rect x="19" y="17" width="22" height="23" rx="2" fill="#951a1c" /><text x="30" y="34" textAnchor="middle" fontSize="15" fill="#c9a0a0" fontFamily="Open Sans, sans-serif">1</text></svg>
      <div className="ml-[5px] h-[57px] w-px bg-[#2c3138]" />
    </div>
  </div>
);

const Caption = () => (
  <div className="absolute bottom-0 left-0 flex h-[66px] items-center">
    <div className="flex h-[66px] w-[66px] items-end justify-center bg-[#ff7b16]">
      <svg width="48" height="48" viewBox="0 0 48 48" className="mb-[9px]" fill="#fff"><circle cx="24" cy="11" r="10" /><path d="M1 48C1 34 7 27 16 24L24 32L32 24C41 27 47 34 47 48Z" /></svg>
    </div>
    <svg width="38" height="44" viewBox="0 0 38 44" className="ml-[20px]"><rect x="10" y="1" width="18" height="31" rx="9" fill="#fff" /><path d="M10 10H28V23A9 9 0 0 1 10 23Z" fill="#3bdb3b" /><path d="M2.5 20C3 42 35 42 35.5 20M19 37V43" stroke="#e8e8e8" strokeWidth="3.5" fill="none" /></svg>
    <span className="mt-[2px] ml-[11px] text-[33px] leading-[48px] whitespace-nowrap text-white">广州航海学院梁利的屏幕共享</span>
  </div>
);

/* ---------- Page ---------- */
export default function App() {
  return (
    <div className="flex h-[1080px] w-[2340px] overflow-hidden bg-black font-['Open_Sans','Noto_Sans_CJK_SC',sans-serif]">
      <div className="relative flex w-[2214px] shrink-0 flex-col">
        <TopBar />
        <main className="flex h-[894px] shrink-0 pl-[339px]">
          <div className="flex w-[1536px] shrink-0 flex-col bg-white">
            <TitleRow />
            <TabRow />
            <div className="flex h-[148px] shrink-0 bg-[#fefefe]">
              <Clipboard /><Slides /><FontGroup /><Paragraph /><Drawing /><Editing />
            </div>
            <div className="h-[3px] shrink-0 border-t-2 border-[#a2a4ab] bg-[#d0d1d8]" />
            <div className="flex h-[641px] shrink-0">
              <SidePanel />
              <div className="flex flex-1 flex-col pl-[6px]">
                <SlideArea />
                <Notes />
              </div>
            </div>
            <StatusBar />
          </div>
          <div className="ml-auto mt-[363px] flex h-[234px] w-[72px] items-center rounded-l-[34px] bg-[#181818] pl-[23px]">
            <svg width="23" height="36" viewBox="0 0 23 36"><path d="M22 1V35L1 18Z" fill="#fff" /></svg>
          </div>
        </main>
        <footer className="flex h-[66px] shrink-0 bg-[#181818] pl-[339px]"><Taskbar /></footer>
        <Caption />
      </div>
      <nav className="flex w-[126px] flex-col items-center bg-[#f6f6f6]">
        <svg width="54" height="48" viewBox="0 0 54 48" className="mt-[261px] shrink-0" fill="none" stroke="#888" strokeWidth="3.8" strokeLinecap="round" strokeLinejoin="round"><path d="M24 3L3 24L24 45M3 24H51" /></svg>
        <div className="mt-[209px] h-[44px] w-[62px] shrink-0 rounded-full border-4 border-[#888]" />
        <div className="mt-[231px] flex flex-col gap-[12px]">
          <div className="h-[4px] w-[53px] rounded-full bg-[#888]" /><div className="h-[4px] w-[53px] rounded-full bg-[#888]" /><div className="h-[4px] w-[53px] rounded-full bg-[#888]" />
        </div>
      </nav>
    </div>
  );
}
